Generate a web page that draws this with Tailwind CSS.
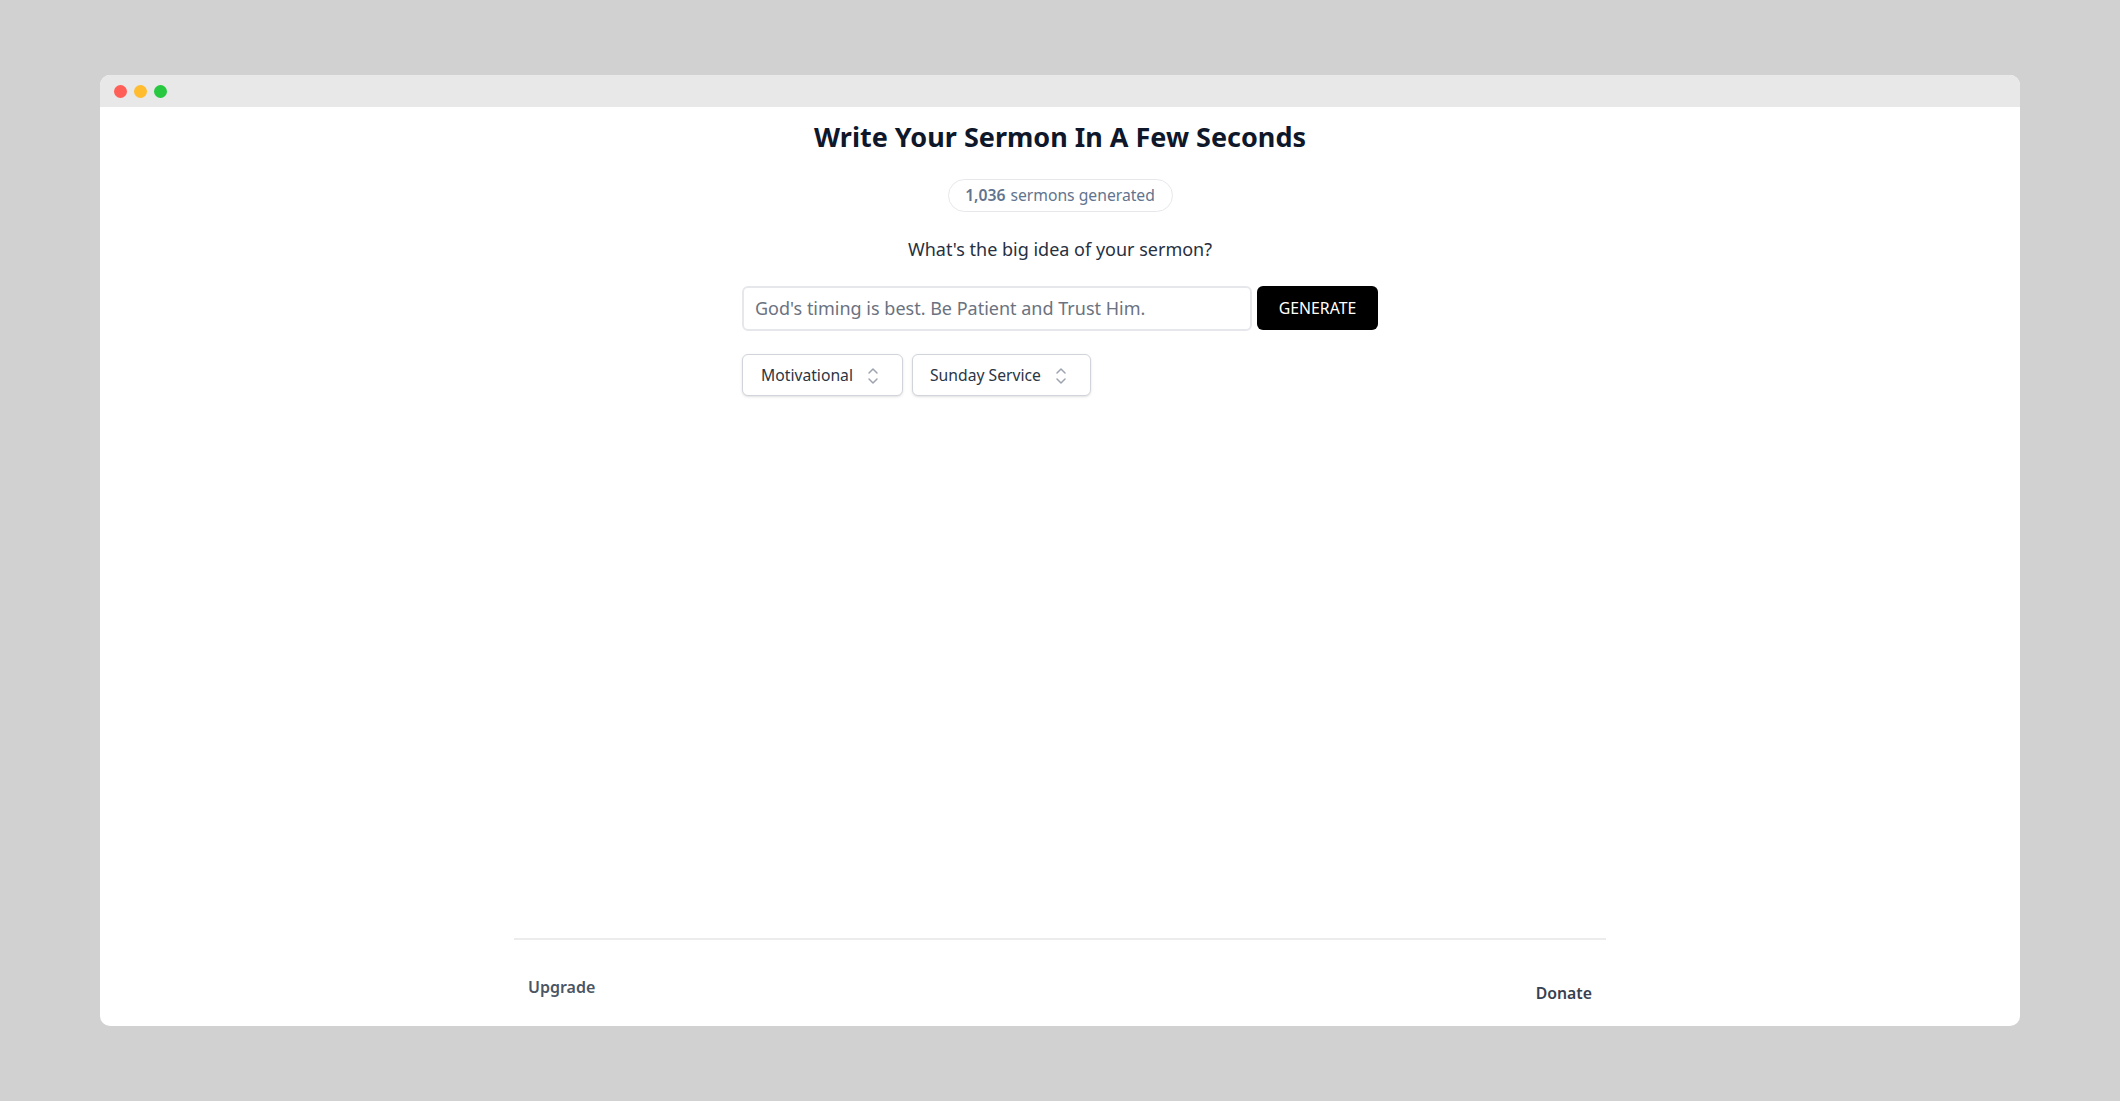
<!DOCTYPE html>
<html lang="en">
<head>
<meta charset="utf-8">
<title>Sermon</title>
<script src="https://cdn.jsdelivr.net/npm/@tailwindcss/browser@4"></script>
</head>
<body class="bg-[#d1d1d1] font-['Noto_Sans',sans-serif] h-[1101px] overflow-hidden">
<div class="px-[100px] pt-[75px]">
  <div class="h-[951px] rounded-[10px] overflow-hidden bg-white flex flex-col">
    <div class="h-[32px] bg-[#e8e8e8] flex items-center gap-[7px] pl-[14px] pt-[1px] shrink-0">
      <span class="w-[13px] h-[13px] rounded-full bg-[#ff5f57]"></span>
      <span class="w-[13px] h-[13px] rounded-full bg-[#febc2e]"></span>
      <span class="w-[13px] h-[13px] rounded-full bg-[#28c840]"></span>
    </div>
    <main class="flex-1 flex flex-col items-center">
      <h1 class="mt-[9px] text-[27px] font-bold text-[#0f172a] h-[42px] leading-[42px]">Write Your Sermon In A Few Seconds</h1>
      <p class="mt-[21px] h-[33px] w-[225px] rounded-full border border-gray-200 flex items-center justify-center text-[15.7px] text-slate-500 gap-[5px]"><b class="font-semibold">1,036</b> sermons generated</p>
      <p class="mt-[23px] text-[18px] leading-[28px] text-[#27303f]">What's the big idea of your sermon?</p>
      <div class="w-[636px] mt-[23px] flex gap-[5px]">
        <div class="w-[510px] h-[45px] rounded-[6px] border-2 border-[#e5e7eb] flex items-center pl-[11px] text-[18px] text-[#6b7280] bg-white">God's timing is best. Be Patient and Trust Him.</div>
        <button class="w-[121px] h-[44px] rounded-[6px] bg-black text-white text-[15.8px] flex items-center justify-center pt-[1px]">GENERATE</button>
      </div>
      <div class="w-[636px] mt-[23px] flex gap-[9px]">
        <button class="w-[161px] h-[42px] rounded-[6px] border border-[#d1d5db] shadow-sm flex items-center pl-[18px] pt-[1px] text-[15.7px] text-[#2b3544] gap-[12px] bg-white">Motivational
          <svg class="w-[16px] h-[20px]" viewBox="0 0 16 20" fill="none" stroke="#9ca3af" stroke-width="1.5" stroke-linecap="round" stroke-linejoin="round"><path d="M4 7l4-4 4 4M4 13l4 4 4-4"/></svg>
        </button>
        <button class="w-[179px] h-[42px] rounded-[6px] border border-[#d1d5db] shadow-sm flex items-center pl-[17px] pt-[1px] text-[15.7px] text-[#2b3544] gap-[12px] bg-white">Sunday Service
          <svg class="w-[16px] h-[20px]" viewBox="0 0 16 20" fill="none" stroke="#9ca3af" stroke-width="1.5" stroke-linecap="round" stroke-linejoin="round"><path d="M4 7l4-4 4 4M4 13l4 4 4-4"/></svg>
        </button>
      </div>
      <div class="flex-1"></div>
      <footer class="w-[1092px] h-[88px] border-t-2 border-[#ececec] flex justify-between px-[14px] font-semibold text-[#374151]">
        <a class="mt-[35px] h-[24px] leading-[24px] text-[16px] text-[#4b5563]">Upgrade</a>
        <a class="mt-[41px] h-[24px] leading-[24px] text-[15.8px]">Donate</a>
      </footer>
    </main>
  </div>
</div>
</body>
</html>
